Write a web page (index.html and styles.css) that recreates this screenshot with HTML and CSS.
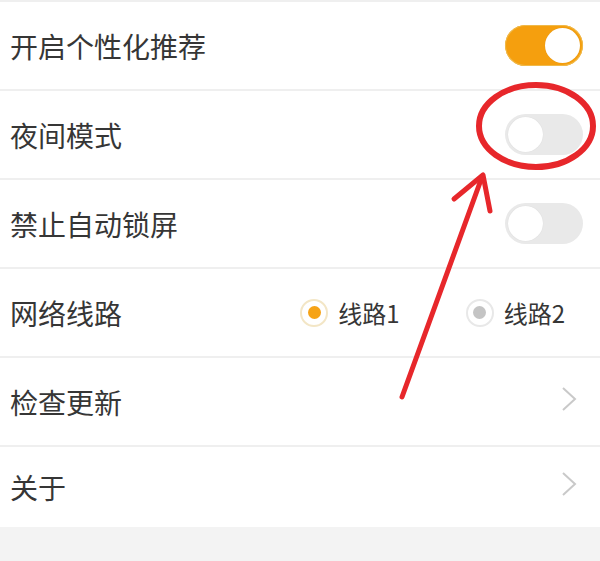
FILE: index.html
```html
<!DOCTYPE html>
<html lang="zh-CN">
<head>
    <meta charset="UTF-8">
    <meta name="viewport" content="width=device-width, initial-scale=1.0">
    <title>设置</title>
    <link rel="stylesheet" href="styles.css">
</head>
<body>
    <div class="settings">
        <div class="row">
            <span class="label">开启个性化推荐</span>
            <span class="switch on"></span>
        </div>
        <div class="row">
            <span class="label">夜间模式</span>
            <span class="switch"></span>
        </div>
        <div class="row">
            <span class="label">禁止自动锁屏</span>
            <span class="switch"></span>
        </div>
        <div class="row">
            <span class="label">网络线路</span>
            <div class="radios">
                <span class="radio checked"><i></i>线路1</span>
                <span class="radio"><i></i>线路2</span>
            </div>
        </div>
        <div class="row">
            <span class="label">检查更新</span>
            <svg class="chevron" width="16" height="26" viewBox="0 0 16 26"><polyline points="2,2 14,13 2,24" /></svg>
        </div>
        <div class="row last">
            <span class="label">关于</span>
            <svg class="chevron" width="16" height="26" viewBox="0 0 16 26"><polyline points="2,2 14,13 2,24" /></svg>
        </div>
    </div>

    <!-- red markup drawn over the screen -->
    <svg class="markup" width="600" height="561" viewBox="0 0 600 561">
        <ellipse cx="536" cy="126" rx="57" ry="41" />
        <line x1="402" y1="397" x2="482" y2="177" />
        <polyline points="454,199 483,175 490,211" />
    </svg>
</body>
</html>
```

FILE: styles.css
```css
*{
    box-sizing: border-box;
}
body{
    margin: 0;
    height: 561px;
    overflow: hidden;
    background-color: #f3f3f3;
    font-family: "Noto Sans CJK SC", "Noto Sans", sans-serif;
    color: #363636;
}
.settings{
    background-color: #fff;
    border-top: 2px solid #efefef;
}
.row{
    display: flex;
    align-items: center;
    justify-content: space-between;
    height: 89px;
    padding: 0 17px 0 10px;
    border-bottom: 2px solid #efefef;
}
.row.last{
    height: 80px;
    border-bottom: none;
}
.label{
    font-size: 28px;
    line-height: 1;
}
.switch{
    position: relative;
    width: 78px;
    height: 41px;
    border-radius: 21px;
    background-color: #e9e9e9;
}
.switch::after{
    content: "";
    position: absolute;
    top: 3px;
    left: 3px;
    width: 35px;
    height: 35px;
    border-radius: 50%;
    background-color: #fff;
    box-shadow: 0 0 1px rgba(0, 0, 0, 0.12);
}
.switch.on{
    background-color: #f59f0e;
    box-shadow: inset 0 0 0 1px #efb94a;
}
.switch.on::after{
    left: auto;
    right: 3px;
}
.radios{
    display: flex;
    align-items: center;
    gap: 66px;
    margin-right: 18px;
}
.radio{
    display: flex;
    align-items: center;
    gap: 10px;
    font-size: 24px;
    line-height: 1;
}
.radio i{
    display: flex;
    align-items: center;
    justify-content: center;
    width: 28px;
    height: 28px;
    border-radius: 50%;
    border: 2px solid #e8e8e8;
}
.radio i::after{
    content: "";
    width: 13px;
    height: 13px;
    border-radius: 50%;
    background-color: #c4c4c4;
}
.radio.checked i{
    border-color: #f3e6c6;
}
.radio.checked i::after{
    background-color: #f6a316;
}
.chevron{
    margin-right: 6px;
    margin-top: -6px;
}
.chevron polyline{
    fill: none;
    stroke: #c9c9c9;
    stroke-width: 2;
}
.markup{
    position: absolute;
    top: 0;
    left: 0;
    pointer-events: none;
}
.markup ellipse, .markup line, .markup polyline{
    fill: none;
    stroke: #e7272b;
    stroke-width: 6;
    stroke-linecap: round;
    stroke-linejoin: round;
}
.markup line, .markup polyline{
    stroke-width: 5;
}
```
